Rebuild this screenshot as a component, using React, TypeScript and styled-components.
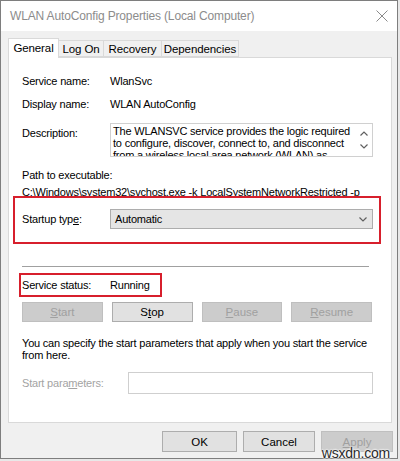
import React from "react";
import styled, { createGlobalStyle } from "styled-components";

const Global = createGlobalStyle`
  html, body { margin: 0; padding: 0; }
  body {
    width: 400px;
    height: 461px;
    overflow: hidden;
    background: #e8e8e8;
    font-family: "Liberation Sans", Arial, sans-serif;
    font-size: 11px;
    letter-spacing: -0.2px;
    color: #000;
  }
`;

const Stage = styled.div`
  position: relative;
  width: 400px;
  height: 461px;
`;

const Window = styled.div`
  width: 396px;
  height: 457px;
  border: 1px solid #7e7e7e;
  background: #f0f0f0;
  display: flex;
  flex-direction: column;
`;

const TitleBar = styled.div`
  height: 30px;
  background: #fff;
  display: flex;
  align-items: center;
  justify-content: space-between;
  padding: 0 9px 0 9px;
`;

const Title = styled.span`
  font-size: 12px;
  color: #8c8c8c;
  letter-spacing: -0.15px;
`;

const Close = styled.svg`
  width: 12px;
  height: 12px;
`;

const TabStrip = styled.div`
  display: flex;
  align-items: flex-end;
  padding-left: 7px;
  margin-top: 7px;
  height: 19px;
  position: relative;
  z-index: 1;
`;

const Tab = styled.div<{ $active?: boolean; $w: number }>`
  box-sizing: border-box;
  width: ${(p) => p.$w}px;
  height: ${(p) => (p.$active ? 20 : 17)}px;
  margin-bottom: ${(p) => (p.$active ? -1 : 0)}px;
  border: 1px solid #d9d9d9;
  border-bottom: ${(p) => (p.$active ? "none" : "1px solid #d9d9d9")};
  border-left: ${(p) => (p.$active ? "1px solid #d9d9d9" : "none")};
  background: ${(p) => (p.$active ? "#fff" : "#f0f0f0")};
  display: flex;
  align-items: center;
  justify-content: center;
  padding-bottom: ${(p) => (p.$active ? 2 : 0)}px;
  font-size: 11.5px;
  letter-spacing: -0.1px;
`;

const Panel = styled.div`
  box-sizing: border-box;
  margin-left: 7px;
  width: 384px;
  height: 366px;
  background: #fff;
  border: 1px solid #d9d9d9;
  padding: 0 0 0 13px;
  display: flex;
  flex-direction: column;
`;

const Field = styled.div<{ $mt: number; $h: number }>`
  margin-top: ${(p) => p.$mt}px;
  height: ${(p) => p.$h}px;
  display: grid;
  grid-template-columns: 88px 1fr;
  align-items: center;
  position: relative;
`;

const Label = styled.span<{ $off?: boolean }>`
  color: ${(p) => (p.$off ? "#a3a3a3" : "#000")};
  white-space: nowrap;
`;

const TopLabel = styled(Label)`
  align-self: start;
  padding-top: 4px;
`;

const Line = styled.div<{ $mt?: number }>`
  margin-top: ${(p) => p.$mt ?? 0}px;
  line-height: 17px;
  height: 17px;
  white-space: nowrap;
`;

const DescBox = styled.div`
  box-sizing: border-box;
  width: 263px;
  height: 34px;
  border: 1px solid #d0d0d0;
  display: flex;
  overflow: hidden;
`;

const DescText = styled.div`
  flex: 1;
  padding: 1px 0 0 2px;
  line-height: 12px;
  overflow: hidden;
`;

const ScrollCol = styled.div`
  width: 17px;
  display: flex;
  flex-direction: column;
  align-items: center;
  padding-top: 7px;
  gap: 8px;
`;

const Arrow = styled.svg`
  width: 8px;
  height: 5px;
`;

const Select = styled.div`
  box-sizing: border-box;
  width: 263px;
  height: 20px;
  background: #e5e5e5;
  border: 1px solid #adadad;
  display: flex;
  align-items: center;
  justify-content: space-between;
  padding: 0 5px 0 4px;
`;

const Highlight = styled.div<{ $t: number; $l: number; $w: number; $h: number }>`
  position: absolute;
  top: ${(p) => p.$t}px;
  left: ${(p) => p.$l}px;
  width: ${(p) => p.$w}px;
  height: ${(p) => p.$h}px;
  box-sizing: border-box;
  border: 2.5px solid #d71f2c;
  pointer-events: none;
`;

const Separator = styled.div`
  margin-top: 37px;
  width: 347px;
  height: 1px;
  background: #a0a0a0;
`;

const ButtonRow = styled.div`
  margin-top: 9px;
  width: 350px;
  display: grid;
  grid-template-columns: repeat(4, 1fr);
  gap: 9px;
`;

const Btn = styled.div<{ $off?: boolean; $w?: number }>`
  box-sizing: border-box;
  height: ${(p) => (p.$w ? 21 : 20)}px;
  width: ${(p) => (p.$w ? `${p.$w}px` : "auto")};
  background: ${(p) => (p.$off ? "#cccccc" : "#e1e1e1")};
  border: 1px solid ${(p) => (p.$off ? "#bfbfbf" : "#adadad")};
  color: ${(p) => (p.$off ? "#a0a0a0" : "#000")};
  display: flex;
  align-items: center;
  justify-content: center;
  font-size: 11.5px;
  letter-spacing: 0;
  u { text-decoration: underline; text-underline-offset: 1px; }
`;

const Help = styled.p`
  margin: 15px 0 0;
  line-height: 12px;
  width: 350px;
`;

const ParamInput = styled.div`
  box-sizing: border-box;
  width: 245px;
  height: 22px;
  border: 1px solid #cfcfcf;
  background: #fff;
`;

const ParamField = styled(Field)`
  grid-template-columns: 106px 1fr;
`;

const Footer = styled.div`
  margin-top: 8px;
  display: flex;
  justify-content: flex-end;
  gap: 6px;
  padding-right: 4px;
`;

const Watermark = styled.span`
  position: absolute;
  right: 10px;
  bottom: 0px;
  font-family: "Liberation Sans", Arial, sans-serif;
  font-size: 14px;
  color: #2a2a2a;
  text-shadow: 0 0 2px #fff, 0 0 2px #fff, 0 0 2px #fff;
`;

const Down = () => (
  <Arrow viewBox="0 0 8 5">
    <path d="M0.5 0.5 L4 4 L7.5 0.5" fill="none" stroke="#606060" strokeWidth="1.2" />
  </Arrow>
);

const Up = () => (
  <Arrow viewBox="0 0 8 5">
    <path d="M0.5 4.5 L4 1 L7.5 4.5" fill="none" stroke="#606060" strokeWidth="1.2" />
  </Arrow>
);

export default function App() {
  return (
    <Stage>
      <Global />
      <Window>
        <TitleBar>
          <Title>WLAN AutoConfig Properties (Local Computer)</Title>
          <Close viewBox="0 0 12 12">
            <path d="M0.5 0.5 L11.5 11.5 M11.5 0.5 L0.5 11.5" stroke="#8a8a8a" strokeWidth="1" />
          </Close>
        </TitleBar>

        <TabStrip>
          <Tab $active $w={51}>General</Tab>
          <Tab $w={45}>Log On</Tab>
          <Tab $w={58}>Recovery</Tab>
          <Tab $w={77}>Dependencies</Tab>
        </TabStrip>

        <Panel>
          <Field $mt={15} $h={16}>
            <Label>Service name:</Label>
            <span>WlanSvc</span>
          </Field>
          <Field $mt={7} $h={16}>
            <Label>Display name:</Label>
            <span>WLAN AutoConfig</span>
          </Field>
          <Field $mt={11} $h={34}>
            <TopLabel>Description:</TopLabel>
            <DescBox>
              <DescText>
                The WLANSVC service provides the logic required to configure, discover, connect to, and
                disconnect from a wireless local area network (WLAN) as defined by IEEE 802.11 standards.
              </DescText>
              <ScrollCol>
                <Up />
                <Down />
              </ScrollCol>
            </DescBox>
          </Field>

          <Line $mt={10}>Path to executable:</Line>
          <Line>C:\Windows\system32\svchost.exe -k LocalSystemNetworkRestricted -p</Line>

          <Field $mt={8} $h={20}>
            <Label>
              Startup typ<u>e</u>:
            </Label>
            <Select>
              <span>Automatic</span>
              <Down />
            </Select>
            <Highlight $t={-13} $l={-9} $w={368} $h={48} />
          </Field>

          <Separator />

          <Field $mt={10} $h={16}>
            <Label>Service status:</Label>
            <span>Running</span>
            <Highlight $t={-4} $l={-3} $w={143} $h={24} />
          </Field>

          <ButtonRow>
            <Btn $off>
              <span><u>S</u>tart</span>
            </Btn>
            <Btn>
              <span>S<u>t</u>op</span>
            </Btn>
            <Btn $off>
              <span><u>P</u>ause</span>
            </Btn>
            <Btn $off>
              <span><u>R</u>esume</span>
            </Btn>
          </ButtonRow>

          <Help>
            You can specify the start parameters that apply when you start the service from here.
          </Help>

          <ParamField $mt={11} $h={22}>
            <Label $off>
              Start para<u>m</u>eters:
            </Label>
            <ParamInput />
          </ParamField>
        </Panel>

        <Footer>
          <Btn $w={75}>OK</Btn>
          <Btn $w={72}>Cancel</Btn>
          <Btn $w={72} $off>
            <span><u>A</u>pply</span>
          </Btn>
        </Footer>
      </Window>
      <Watermark>wsxdn.com</Watermark>
    </Stage>
  );
}
